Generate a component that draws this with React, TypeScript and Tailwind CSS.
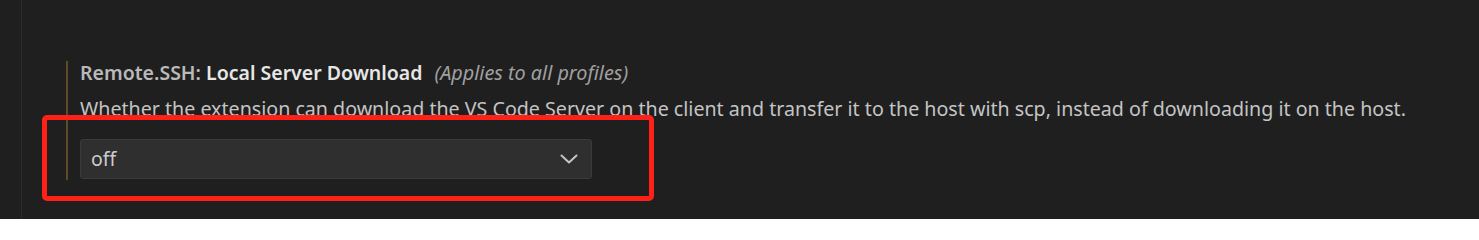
import React from "react";

const font = { fontFamily: '"Noto Sans", "Open Sans", sans-serif' };

function Chevron() {
  return (
    <svg width="18" height="10" viewBox="0 0 18 10" fill="none" className="text-[#c5c5c5]">
      <path d="M1.5 1.5 L9 8.5 L16.5 1.5" stroke="currentColor" strokeWidth="2" strokeLinecap="round" strokeLinejoin="round" />
    </svg>
  );
}

export default function App() {
  return (
    <div className="relative h-[219px] w-full overflow-hidden bg-[#1f1f1f]" style={font}>
      <div className="flex h-full">
        <div className="ml-[21px] w-px bg-[#2b2b2b]" />
        <div className="pl-[44px] pt-[61px]">
          <div className="border-l-2 border-[#5c4a2a] pl-[12px]">
            <div className="flex items-baseline text-[19.5px] leading-[24px]">
              <span className="font-semibold text-[#b9b9b9]">Remote.SSH:&nbsp;</span>
              <span className="font-semibold text-[#e6e6e6]">Local Server Download</span>
              <span className="ml-[12px] text-[19.8px] italic text-[#a0a0a0]">(Applies to all profiles)</span>
            </div>
            <p className="mt-[11px] text-[19.65px] leading-[26px] text-[#c4c4c4]">
              Whether the extension can download the VS Code Server on the client and transfer it to the host with scp, instead of downloading it on the host.
            </p>
            <div className="mt-[17px] pb-[1px]">
              <div className="flex h-[40px] w-[512px] items-center justify-between rounded-[3px] border border-[#3a3a3a] bg-[#2f2f2f] pl-[10px] pr-[13px]">
                <span className="text-[19.5px] text-[#cccccc]">off</span>
                <Chevron />
              </div>
            </div>
          </div>
        </div>
      </div>
      <div className="pointer-events-none absolute left-[42px] top-[115px] h-[86px] w-[612px] rounded-[5px] border-[5px] border-[#ff2118]" />
    </div>
  );
}
